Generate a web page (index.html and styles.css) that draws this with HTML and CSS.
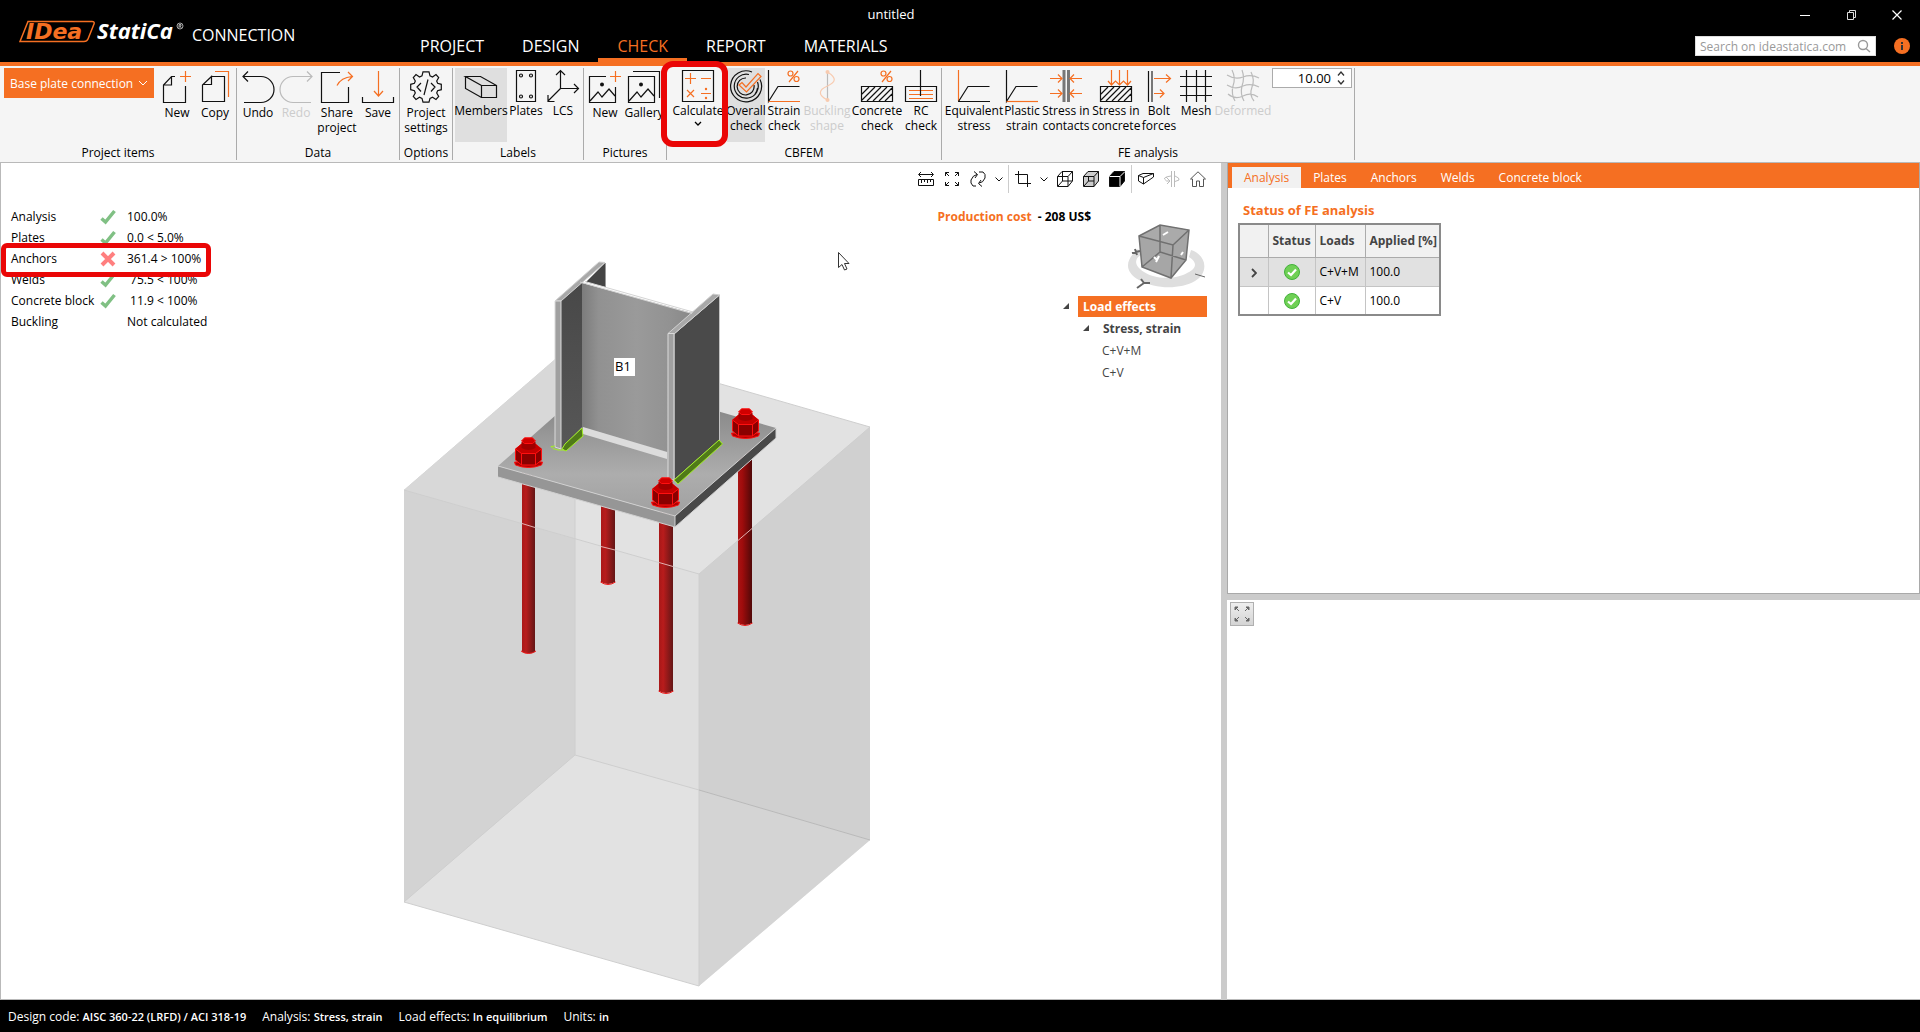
FILE: index.html
```html
<!DOCTYPE html>
<html lang="en">

<head>
  <meta charset="utf-8">
  <title>untitled</title>
  <meta name="viewport" content="width=device-width, initial-scale=1.0">
  <link rel="stylesheet" href="styles.css">
</head>

<body>
  <header class="topbar">
    <div class="brand">
      <svg class="logo" width="170" height="30" viewBox="0 0 170 30" role="img" aria-label="IDEA StatiCa">
        <path d="M2 22.500 L10 2.500 H74 Q77 2.500 76 5 L70 20 Q69 22.500 66 22.500 Z" fill="#000" stroke="#f56f22" stroke-width="1.500"/>
        <text class="logo-idea" x="8" y="20">IDea</text>
        <text class="logo-statica" x="79" y="20">StatiCa</text>
        <circle cx="162" cy="7" r="3" fill="none" stroke="#ccc" stroke-width="0.800"/>
        <path d="M161 9 V5.500 H163 V7 H161 M162 7 L163.300 9" fill="none" stroke="#ccc" stroke-width="0.800"/>
      </svg>
      <span class="product">CONNECTION</span>
    </div>
    <nav class="menu">
      <a href="#">PROJECT</a>
      <a href="#">DESIGN</a>
      <a href="#" class="active">CHECK</a>
      <a href="#">REPORT</a>
      <a href="#">MATERIALS</a>
    </nav>
    <div class="doc-title">untitled</div>
    <div class="top-right">
      <div class="window-buttons">
        <button aria-label="Minimize"><svg width="10" height="10"><path d="M0 5.500 H10" stroke="#fff"/></svg></button>
        <button aria-label="Restore"><svg width="10" height="10" fill="none" stroke="#ddd"><path d="M1.500 2.500 H7.500 V9.500 H1.500 Z M3.500 2.500 V0.500 H9.500 V7.500 H7.500"/></svg></button>
        <button aria-label="Close"><svg width="10" height="10"><path d="M0.500 0.500 L9.500 9.500 M9.500 0.500 L0.500 9.500" stroke="#fff" stroke-width="1.200"/></svg></button>
      </div>
      <div class="search-row">
        <div class="search">
          <input type="text" placeholder="Search on ideastatica.com" aria-label="Search on ideastatica.com">
          <svg width="14" height="14" fill="none" stroke="#999" stroke-width="1.400"><circle cx="6" cy="6" r="4.500"/><path d="M9 9.500 L13 13"/></svg>
        </div>
        <button class="info" aria-label="Info">
          <svg width="16" height="16"><circle cx="8" cy="8" r="8" fill="#f56f22"/><path d="M7 4 H9 V6 H7 Z M7 7 H9 V12 H7 Z" fill="#333"/></svg>
        </button>
      </div>
    </div>
  </header>

  <div class="ribbon">
    <section class="group low">
      <div class="tools">
        <div class="combo">
          <select aria-label="Project item">
            <option>Base plate connection</option>
          </select>
          <svg width="10" height="6"><path d="M1 1 L5 5 L9 1" fill="none" stroke="#fff"/></svg>
        </div>
        <button class="tool w38">
          <svg class="icon" viewBox="3 0 32 32"><path d="M17 5.500 H13.500 L5.500 14 V31.500 H27.500 V15 M5.500 14 H13.500 V5.500"/><path class="o" d="M27.500 0 V11 M22 5.500 H33"/></svg>
          <span>New</span>
        </button>
        <button class="tool w38">
          <svg class="icon" viewBox="0 0 32 32"><path d="M12.500 5.500 H25.500 V30.500 H3.500 V14 L12.500 5.500 V13.500 H3.500"/><path class="o" d="M16 0.500 H29.500 V26"/></svg>
          <span>Copy</span>
        </button>
      </div>
      <h2>Project items</h2>
    </section>

    <section class="group low">
      <div class="tools">
        <button class="tool w38">
          <svg class="icon" viewBox="0 0 32 32"><path d="M6 0.500 L1 5.500 L6 10.500 M1 5.500 H19 A13 13 0 0 1 19 31.500 H2"/></svg>
          <span>Undo</span>
        </button>
        <button class="tool w38" disabled>
          <svg class="icon" viewBox="0 0 32 32"><path d="M27 0.500 L32 5.500 L27 10.500 M32 5.500 H13 A13 13 0 0 0 13 31.500 H31"/></svg>
          <span>Redo</span>
        </button>
        <button class="tool w44">
          <svg class="icon" viewBox="0 0 32 32"><path d="M19 1.500 H0.500 V31.500 H27.500 V16"/><path class="o" d="M16 14.500 Q20 6.500 31 5.500 M27 1 L31.500 5.500 L27 10"/></svg>
          <span>Share<br>project</span>
        </button>
        <button class="tool w38">
          <svg class="icon" viewBox="0 0 32 32"><path d="M0.500 26 V31.500 H31.500 V26"/><path class="o" d="M16.500 0 V24 M12 20 L16.500 25 L21 20"/></svg>
          <span>Save</span>
        </button>
      </div>
      <h2>Data</h2>
    </section>

    <section class="group low">
      <div class="tools">
        <button class="tool w48">
          <svg class="icon" viewBox="0 0 32 32"><path d="M13 0.800 H19 L20 4.800 L22.500 6 L26 3.600 L28.700 6.500 L26.700 10 L27.600 12.300 L31.300 13.300 V18.700 L27.600 19.700 L26.700 22 L28.700 25.500 L26 28.400 L22.500 26.200 L20 27.400 L19 31.200 H13 L12 27.400 L9.500 26.200 L6 28.400 L3.300 25.500 L5.300 22 L4.400 19.700 L0.700 18.700 V13.300 L4.400 12.300 L5.300 10 L3.300 6.500 L6 3.600 L9.500 6 L12 4.800 Z M11 12 L7 16 L11 20.500 M21 12 L25 16 L21 20.500 M18 8.500 L14 24"/></svg>
          <span>Project<br>settings</span>
        </button>
      </div>
      <h2>Options</h2>
    </section>

    <section class="group">
      <div class="tools">
        <button class="tool w52 on">
          <svg class="icon" viewBox="0 0 32 32"><path d="M16.500 15.500 H31.500 V27.500 H16.500 Z M16.500 15.500 L0.500 6.500 H15.500 L31.500 15.500 M0.500 6.500 V18.500 L16.500 27.500"/></svg>
          <span>Members</span>
        </button>
        <button class="tool w38">
          <svg class="icon" viewBox="0 0 32 32"><path d="M6.500 0.500 H25.500 V31.500 H6.500 Z"/><circle cx="11" cy="5.500" r="1.500"/><circle cx="21" cy="5.500" r="1.500"/><circle cx="11" cy="26.500" r="1.500"/><circle cx="21" cy="26.500" r="1.500"/></svg>
          <span>Plates</span>
        </button>
        <button class="tool w36">
          <svg class="icon" viewBox="0 0 32 32"><path d="M13.500 19 V1 M9 5 L13.500 0.500 L18 5 M13.500 18.500 H31 M27 14 L31.500 18.500 L27 23 M13.500 18.500 L1 31 M1 25 V31.500 H7.500"/></svg>
          <span>LCS</span>
        </button>
      </div>
      <h2>Labels</h2>
    </section>

    <section class="group low">
      <div class="tools">
        <button class="tool w38">
          <svg class="icon" viewBox="0 0 32 32"><path d="M17 5.500 H0.500 V31.500 H26.500 V16 M1 30 L9 21 L13 26 L20 18 L26 25"/><circle class="dot" cx="13" cy="13.500" r="2"/><path class="o" d="M26.500 0 V11 M21 5.500 H32"/></svg>
          <span>New</span>
        </button>
        <button class="tool w40">
          <svg class="icon" viewBox="0 0 32 32"><path d="M0.500 5.500 H26.500 V31.500 H0.500 Z M1 30 L9 21 L13 26 L20 18 L26 25 M5 0.500 H31.500 V27"/><circle class="dot" cx="13" cy="13.500" r="2"/></svg>
          <span>Gallery</span>
        </button>
      </div>
      <h2>Pictures</h2>
    </section>

    <section class="group">
      <div class="tools">
        <button class="tool w58 marked">
          <svg class="icon" viewBox="0 0 32 32"><path d="M0.500 0.500 H31.500 V31.500 H0.500 Z"/><path class="o" d="M3 8.500 H14 M8.500 3 V14 M19 8.500 H29 M5 20 L12 27 M12 20 L5 27 M19 23.500 H29"/><circle class="od" cx="24" cy="19" r="1.200"/><circle class="od" cx="24" cy="28" r="1.200"/></svg>
          <span>Calculate</span>
          <svg class="more" width="8" height="5"><path d="M1 1 L4 4 L7 1" fill="none" stroke="#000" stroke-width="1.300"/></svg>
        </button>
        <button class="tool w38 on">
          <svg class="icon" viewBox="0 0 32 32"><path d="M22 2 A15.500 15.500 0 1 0 30 9.500 M19 4.500 A12 12 0 1 0 27.500 12 M27.500 18 A12 12 0 0 1 25 24 M16 8 A8.500 8.500 0 1 0 24 15"/><path class="o" d="M9 15 L12 12.500 L16 17 L28 3.500 L31 6.500 L16.500 22 Z"/></svg>
          <span>Overall<br>check</span>
        </button>
        <button class="tool w38">
          <svg class="icon" viewBox="0 0 32 32"><path d="M0.500 0 V31.500 L10 16.500 H31.500"/><path class="o" d="M0.500 31.500 H32 M30 1 L21 12"/><circle class="o" cx="22.500" cy="3.500" r="2.500"/><circle class="o" cx="28.500" cy="9" r="2.500"/></svg>
          <span>Strain<br>check</span>
        </button>
        <button class="tool w48" disabled>
          <svg class="icon" viewBox="0 0 32 32"><path d="M16.500 2 V30"/><path class="faded" d="M16.500 2 C26 8 25 12 16.500 16 C7 20 7 25 16.500 30"/><circle class="faded-dot" cx="16.500" cy="2" r="2"/><circle class="faded-dot" cx="16.500" cy="30" r="2"/></svg>
          <span>Buckling<br>shape</span>
        </button>
        <button class="tool w52">
          <svg class="icon" viewBox="0 0 32 32"><path d="M0.500 16.500 H31.500 V31.500 H0.500 Z M1 24 L8 17 M1 30 L14 17 M6 31 L20 17 M12 31 L26 17 M18 31 L31 18 M24 31 L31 24"/><path class="o" d="M30 1 L21 12"/><circle class="o" cx="22.500" cy="3.500" r="2.500"/><circle class="o" cx="28.500" cy="9" r="2.500"/></svg>
          <span>Concrete<br>check</span>
        </button>
        <button class="tool w36">
          <svg class="icon" viewBox="0 0 32 32"><path d="M0.500 16.500 H31.500 V31.500 H0.500 Z"/><path class="o" d="M4 20.500 H28 M4 24.500 H28 M4 28.500 H28"/><path d="M15.500 0 V26"/></svg>
          <span>RC<br>check</span>
        </button>
      </div>
      <h2>CBFEM</h2>
    </section>

    <section class="group">
      <div class="tools">
        <button class="tool w60">
          <svg class="icon" viewBox="0 0 32 32"><path class="o" d="M0.500 0 V31"/><path d="M0.500 31.500 L10 16.500 H31.500 M0 31.500 H32"/></svg>
          <span>Equivalent<br>stress</span>
        </button>
        <button class="tool w36">
          <svg class="icon" viewBox="0 0 32 32"><path d="M0.500 0 V31.500 L10 16.500 H31.500"/><path class="o" d="M0.500 31.500 H32"/></svg>
          <span>Plastic<br>strain</span>
        </button>
        <button class="tool w52">
          <svg class="icon" viewBox="0 0 32 32"><path class="bars" d="M14 0 V32 M18.500 0 V32"/><path class="o" d="M0 8.500 H12 M8 4.500 L12 8.500 L8 12.500 M0 23.500 H12 M8 19.500 L12 23.500 L8 27.500 M32 8.500 H20 M24 4.500 L20 8.500 L24 12.500 M32 23.500 H20 M24 19.500 L20 23.500 L24 27.500"/></svg>
          <span>Stress in<br>contacts</span>
        </button>
        <button class="tool w48">
          <svg class="icon" viewBox="0 0 32 32"><path d="M0.500 16.500 H31.500 V31.500 H0.500 Z M1 24 L8 17 M1 30 L14 17 M6 31 L20 17 M12 31 L26 17 M18 31 L31 18 M24 31 L31 24"/><path class="o" d="M11.500 0 V15 M8 11 L11.500 15 L15.500 11 L19.500 15 L23.500 11 L27.500 15 L31 11 M19.500 0 V15 M27.500 0 V15"/></svg>
          <span>Stress in<br>concrete</span>
        </button>
        <button class="tool w38">
          <svg class="icon" viewBox="0 0 32 32"><path d="M5.500 1 V32"/><path class="bar" d="M9 1 V32"/><path class="o" d="M11 8.500 H27 M23 4.500 L27.500 8.500 L23 12.500 M11 23.500 H20 M17 19.500 L21 23.500 L17 27.500"/></svg>
          <span>Bolt<br>forces</span>
        </button>
        <button class="tool w36">
          <svg class="icon" viewBox="0 0 32 32"><path d="M6.500 0 V32 M16.500 0 V32 M25.500 0 V32 M0 6.500 H32 M0 16.500 H32 M0 25.500 H32"/></svg>
          <span>Mesh</span>
        </button>
        <button class="tool w58" disabled>
          <svg class="icon" viewBox="0 0 32 32"><path d="M5 0 Q9 8 6 16 Q4 24 8 31 M15 0 Q18 8 15 16 Q13 24 17 31 M24 2 Q28 10 25 17 Q22 25 27 31 M0 5 Q8 10 16 7 Q24 4 32 8 M0 15 Q8 20 16 16 Q24 13 32 17 M1 24 Q8 30 16 26 Q24 22 31 27"/></svg>
          <span>Deformed</span>
        </button>
        <div class="spinner">
          <input type="text" value="10.00" aria-label="Deformation scale">
          <div class="arrows">
            <button aria-label="Increase"><svg width="8" height="5"><path d="M1 4.500 L4 1 L7 4.500" fill="none" stroke="#333" stroke-width="1.300"/></svg></button>
            <button aria-label="Decrease"><svg width="8" height="5"><path d="M1 0.500 L4 4 L7 0.500" fill="none" stroke="#333" stroke-width="1.300"/></svg></button>
          </div>
        </div>
      </div>
      <h2>FE analysis</h2>
    </section>
  </div>

  <main class="workspace">
    <div class="viewport">
      <svg class="scene" viewBox="1 163 1220 836">
        <defs>
          <linearGradient id="rod" x1="0" x2="1"><stop offset="0" stop-color="#a81818"/><stop offset="0.300" stop-color="#b81c1c"/><stop offset="1" stop-color="#641616"/></linearGradient>
          <linearGradient id="rodDark" x1="0" x2="1"><stop offset="0" stop-color="#a81414"/><stop offset="0.300" stop-color="#a00c0c"/><stop offset="1" stop-color="#500808"/></linearGradient>
          <linearGradient id="web" x1="0" x2="1"><stop offset="0" stop-color="#7c7c7c"/><stop offset="0.150" stop-color="#919191"/><stop offset="0.500" stop-color="#9a9a9a"/><stop offset="0.800" stop-color="#929292"/><stop offset="1" stop-color="#888"/></linearGradient>
          <linearGradient id="flange" x1="0" x2="0" y1="0" y2="1"><stop offset="0" stop-color="#484848"/><stop offset="1" stop-color="#575757"/></linearGradient>
          <linearGradient id="plate" x1="0" x2="0" y1="0" y2="1"><stop offset="0" stop-color="#777"/><stop offset="0.450" stop-color="#9a9a9a"/><stop offset="0.700" stop-color="#adadad"/><stop offset="1" stop-color="#a0a0a0"/></linearGradient>
          <g id="bolt" stroke="#ff1010" stroke-width="1">
            <path d="M0 25 L1 28 Q14 33 27 28 L28 25 Z" fill="#b00000"/>
            <path d="M1 12 L7 7 H21 L27 12 V23 L21 28 H7 L1 23 Z" fill="#8a0000"/>
            <path d="M1 12 L7 7 H21 L27 12 L21 17 H7 Z" fill="#c40000" stroke="none"/>
            <path d="M1 12 L7 16.500 H21 L27 12 M7 16.500 V28 M21 16.500 V28" fill="none"/>
            <path d="M7 5 V11 Q14 15 21 11 V5 Z" fill="#a00000" stroke="none"/>
            <path d="M7 4 L10 0.800 H18 L21 4 L18 6.500 H10 Z" fill="#d00000"/>
          </g>
        </defs>

        <!-- concrete block -->
        <path d="M404 490 L575 342 L870 427 V840 L699 986 L404 902 Z" fill="#e2e2e2"/>
        <path d="M404 490 L575 539 L699 574 V790 L575 755 L404 902 Z" fill="#dfdfdf"/>
        <path d="M404 490 L575 342 V755 L404 902 Z" fill="#d3d3d3"/>
        <path d="M404 490 L575 342 V539 Z" fill="#d8d8d8"/>
        <path d="M699 574 L870 427 V840 L699 790 Z" fill="#d0d0d0"/>
        <path d="M699 790 L870 840 L699 986 Z" fill="#d4d4d4"/>
        <path d="M575 342 L870 427 M575 342 V755 L699 790 M404 902 L699 986 M404 902 L575 755 M699 574 V986 M404 490 L699 574 L870 427" fill="none" stroke="#cecece"/>
        <path d="M699 790 L870 840" fill="none" stroke="#b9b9b9"/>

        <!-- anchors -->
        <path d="M601 500 H615 V582 Q608 586 601 582 Z" fill="url(#rod)"/>
        <path d="M522 450 H535 V652 Q528 655 522 652 Z" fill="url(#rod)"/>
        <path d="M659 500 H673 V691 Q666 695 659 691 Z" fill="url(#rod)"/>
        <path d="M738 440 H752 V623 Q745 627 738 623 Z" fill="url(#rodDark)"/>
        <path d="M600.500 582 Q608 587 615.500 582 M521 651 Q528.500 656 536 651 M658.500 691 Q666 696 673.500 691 M737.500 623 Q745 628 752.500 623" fill="none" stroke="#f01818"/>
        <path d="M522 523.500 L535 527.500 M601 546.500 L615 550 M659 562.500 L673 566.500 M738 540.500 L752 528.500" stroke="#e0b0b0"/>

        <!-- base plate -->
        <path d="M498 466 L599 377 L776 428 L675 516 Z" fill="url(#plate)"/>
        <path d="M498 466 L675 516 V527 L498 477 Z" fill="#969696"/>
        <path d="M675 516 L776 428 V438 L675 527 Z" fill="#494949"/>
        <path d="M498 466 L675 516 L776 428 M675 516 V527 M776 428 V438 L675 527 L498 477" fill="none" stroke="#d0d0d0"/>

        <!-- column -->
        <path d="M586 282 L605 263 V287 Z" fill="#444"/>
        <path d="M561 301 L582 282 V427 L561 449 Z" fill="url(#flange)"/>
        <path d="M582 283 L692 313 L668 334 V452 L582 427 Z" fill="url(#web)"/>
        <path d="M583 427 L667 452 V459 L583 434 Z" fill="#dcdcdc"/>
        <path d="M555 301 L599 262 L605 262.500 L561 301 Z" fill="#a8a8a8" stroke="#cfcfcf"/>
        <path d="M555 301 H561 V449 L555 447 Z" fill="#a0a0a0" stroke="#dadada"/>
        <path d="M674 334 L719.500 295 V440 L674 480 Z" fill="#4a4a4a" stroke="#c4c4c4"/>
        <path d="M668 333.500 L713 294 L719.500 295 L674 334 Z" fill="#a8a8a8" stroke="#cfcfcf"/>
        <path d="M668 333.500 H674 V480 H668 Z" fill="#a0a0a0" stroke="#dadada"/>
        <path d="M580 282 L692 313.500 M585 281.500 L693 312" fill="none" stroke="#d4d4d4"/>
        <path d="M605.500 263 V287" stroke="#999"/>

        <!-- welds -->
        <path d="M582 428 L583 436 L566 451 L562 449 L565 444 Z" fill="#507a18" stroke="#a4f028"/>
        <path d="M555 446 L551 446.500 L553 448.500 L558 450 H564" fill="none" stroke="#a4f028"/>
        <path d="M719 440 L722.500 444 L678 484 L674 480 Z" fill="#507a18" stroke="#a4f028"/>

        <use href="#bolt" x="514.500" y="437"/>
        <use href="#bolt" x="651.500" y="477"/>
        <use href="#bolt" x="731.500" y="408"/>

        <path d="M614 358 H635 V376 H614 Z" fill="#fff"/>
        <text class="member-name" x="615" y="371">B1</text>

        <path d="M838.500 252.500 V267.500 L842 264.500 L844.500 270 L847 269 L844.500 263.500 H849 Z" fill="#fff" stroke="#333"/>
      </svg>

      <ul class="summary">
        <li><span>Analysis</span><svg class="mark" viewBox="0 0 16 16"><path d="M1.500 9.500 L5.500 13 L14.500 2" fill="none" stroke="#80c084" stroke-width="3.500"/></svg><span>100.0%</span></li>
        <li><span>Plates</span><svg class="mark" viewBox="0 0 16 16"><path d="M1.500 9.500 L5.500 13 L14.500 2" fill="none" stroke="#80c084" stroke-width="3.500"/></svg><span>0.0 &lt; 5.0%</span></li>
        <li class="failed"><span>Anchors</span><svg class="mark" viewBox="0 0 16 16"><path d="M2 2 L14 14 M14 2 L2 14" fill="none" stroke="#ff7f7f" stroke-width="4"/></svg><span>361.4 &gt; 100%</span></li>
        <li><span>Welds</span><svg class="mark" viewBox="0 0 16 16"><path d="M1.500 9.500 L5.500 13 L14.500 2" fill="none" stroke="#80c084" stroke-width="3.500"/></svg><span>&nbsp;75.5 &lt; 100%</span></li>
        <li><span>Concrete block</span><svg class="mark" viewBox="0 0 16 16"><path d="M1.500 9.500 L5.500 13 L14.500 2" fill="none" stroke="#80c084" stroke-width="3.500"/></svg><span>&nbsp;11.9 &lt; 100%</span></li>
        <li><span>Buckling</span><i></i><span>Not calculated</span></li>
      </ul>

      <div class="view-panel">
        <div class="view-tools">
          <button aria-label="Measure"><svg width="16" height="16"><path d="M0.500 8.500 H15.500 V14.500 H0.500 Z M3.500 9 V12 M6.500 9 V11 M9.500 9 V12 M12.500 9 V11 M1 3.500 H15 M3 1 L0.500 3.500 L3 6 M13 1 L15.500 3.500 L13 6"/></svg></button>
          <button aria-label="Zoom all"><svg width="16" height="16"><path d="M1.500 5 V1.500 H5 M1.500 1.500 L5 5 M11 1.500 H14.500 V5 M14.500 1.500 L11 5 M1.500 11 V14.500 H5 M1.500 14.500 L5 11 M14.500 11 V14.500 H11 M14.500 14.500 L11 11"/></svg></button>
          <button aria-label="Rotate"><svg width="16" height="16"><path d="M6 15 H3 Q0 12 1 9 Q3 4 7 3.500 M4 0.500 L7.500 3.500 L5 7 M9 1 H13 Q16 3 15 7 Q13 12 9 12 M11 9 L8.500 12.500 L12 15.500"/></svg></button>
          <button class="chevron" aria-label="More rotations"><svg width="8" height="5"><path d="M0.500 0.500 L4 4 L7.500 0.500"/></svg></button>
          <i class="sep"></i>
          <button aria-label="Clip"><svg width="16" height="16"><path d="M0 3.500 H12.500 V16 M3.500 0 V12.500 H16"/></svg></button>
          <button class="chevron" aria-label="More clipping"><svg width="8" height="5"><path d="M0.500 0.500 L4 4 L7.500 0.500"/></svg></button>
          <button aria-label="Wireframe"><svg width="16" height="16"><path d="M0.500 5.500 L5 0.500 H15.500 V10 L11 15.500 H0.500 Z M0.500 5.500 H11 V15.500 M11 5.500 L15.500 0.500 M5.500 1 V10 H15 M5.500 10 L1 15"/></svg></button>
          <button aria-label="Transparent"><svg width="16" height="16"><path fill="#ccc" d="M0.500 5.500 L5 0.500 H15.500 V10 L11 15.500 H0.500 Z"/><path d="M0.500 5.500 H11 V15.500 M11 5.500 L15.500 0.500 M5.500 6 V10 H11 M5.500 10 L1 15"/></svg></button>
          <button aria-label="Solid"><svg width="16" height="16"><path fill="#000" d="M0.500 5.500 L5 0.500 H15.500 V10 L11 15.500 H0.500 Z"/><path stroke="#fff" d="M0.500 5.500 H11 V15.500 M11 5.500 L15.500 1"/></svg></button>
          <i class="sep"></i>
          <button aria-label="Members"><svg width="16" height="16"><path d="M0.500 4.500 L5 2.500 H15.500 V6 L5.500 13 L0.500 10 Z M0.500 4.500 L5.500 6.500 V13 M5.500 6.500 L15.500 2.500"/></svg></button>
          <button class="off" aria-label="Cut"><svg width="16" height="16"><path d="M7.500 0 V16 M10.500 0 V16 M7 5 Q0 6 0.500 8 Q2 11 6 10 M11 5 Q16 7 15 9 L11 10.500 M2 6 L6 10 L3 13"/></svg></button>
          <button aria-label="Home"><svg width="16" height="16"><path stroke="#555" d="M0.500 8 L8 0.800 L15.500 8 H13.500 V15.500 H9.500 V10 H6.500 V15.500 H2.500 V8 Z"/></svg></button>
        </div>

        <p class="cost"><span>Production cost</span> - 208 US$</p>

        <svg class="nav-cube" width="80" height="66" viewBox="0 0 80 66">
          <path d="M11 25 C-1 35 -4 47 12 56 C30 66 54 65 68 57 C82 49 80 31 64 26 L62 33 C74 41 66 47 56 51 C42 56 26 54 17 48 C6 41 8 34 14 31 Z" fill="#dedede"/>
          <path d="M12 12 L33 1 L62 6 L59 36 L44 54 L15 43 Z" fill="#9c9c9c" opacity="0.900"/>
          <path d="M12 12 L33 1 L62 6 L46 21 Z" fill="#aaa"/>
          <path d="M12 12 L33 1 L62 6 L59 36 L44 54 L15 43 Z M12 12 L46 21 L62 6 M46 21 L44 54 M33 1 V28 L59 36 M33 28 L15 43" fill="none" stroke="#707070" stroke-width="1.500"/>
          <path d="M36 11 L41 8 M27 33 L30 36 L32 32 M29 38 L30 36 M54 31 L56 28" stroke="#fff" stroke-width="2" fill="none"/>
          <path d="M5 29 L13 27 M8 25 L10 31 M14 55 L17 59 L23 59 M17 59 L10 64" stroke="#666" stroke-width="2" fill="none"/>
          <path d="M68 50 L78 53" stroke="#666"/>
        </svg>

        <ul class="tree">
          <li class="root"><svg width="6" height="6"><path d="M6 0 V6 H0 Z" fill="#444"/></svg><a href="#">Load effects</a></li>
          <li class="branch"><svg width="6" height="6"><path d="M6 0 V6 H0 Z" fill="#444"/></svg><a href="#">Stress, strain</a></li>
          <li class="leaf"><a href="#">C+V+M</a></li>
          <li class="leaf"><a href="#">C+V</a></li>
        </ul>
      </div>
    </div>

    <aside class="side">
      <section class="results">
        <nav class="tabs">
          <a href="#" class="active">Analysis</a>
          <a href="#">Plates</a>
          <a href="#">Anchors</a>
          <a href="#">Welds</a>
          <a href="#">Concrete block</a>
        </nav>
        <h3>Status of FE analysis</h3>
        <table>
          <thead>
            <tr><th class="c-mark"></th><th class="c-status">Status</th><th class="c-loads">Loads</th><th class="c-applied">Applied [%]</th></tr>
          </thead>
          <tbody>
            <tr class="selected">
              <td class="center"><svg width="6" height="10"><path d="M1 1 L5 5 L1 9" fill="none" stroke="#444" stroke-width="1.800"/></svg></td>
              <td class="center"><svg width="16" height="16"><circle cx="8" cy="8" r="7.500" fill="#6fd055" stroke="#42b13a"/><path d="M4 8.500 L7 11 L12 5.500" fill="none" stroke="#fff" stroke-width="2.200"/></svg></td>
              <td>C+V+M</td>
              <td>100.0</td>
            </tr>
            <tr>
              <td></td>
              <td class="center"><svg width="16" height="16"><circle cx="8" cy="8" r="7.500" fill="#6fd055" stroke="#42b13a"/><path d="M4 8.500 L7 11 L12 5.500" fill="none" stroke="#fff" stroke-width="2.200"/></svg></td>
              <td>C+V</td>
              <td>100.0</td>
            </tr>
          </tbody>
        </table>
      </section>
      <section class="detail">
        <button class="fit" aria-label="Zoom all">
          <svg width="16" height="16" fill="#666" stroke="#666"><path d="M1 1 H4 L1 4 Z M2 2 L5 5 M15 1 V4 L12 1 Z M14 2 L11 5 M1 15 V12 L4 15 Z M2 14 L5 11 M15 15 H12 L15 12 Z M14 14 L11 11"/></svg>
        </button>
      </section>
    </aside>
  </main>

  <footer class="statusbar">
    <span>Design code: <b>AISC 360-22 (LRFD) / ACI 318-19</b></span>
    <span>Analysis: <b>Stress, strain</b></span>
    <span>Load effects: <b>In equilibrium</b></span>
    <span>Units: <b>in</b></span>
  </footer>
</body>

</html>
```
FILE: styles.css
```css
* {
  margin: 0;
  padding: 0;
  box-sizing: border-box;
}

body {
  display: flex;
  flex-direction: column;
  height: 100vh;
  overflow: hidden;
  background: #fff;
  color: #000;
  font-family: 'Segoe UI', 'Open Sans', 'Noto Sans', sans-serif;
  font-size: 12px;
  line-height: 15px;
}

button,
input,
select {
  border: none;
  background: none;
  color: inherit;
  font: inherit;
}

a {
  color: inherit;
  text-decoration: none;
}

ul {
  list-style: none;
}

/* top bar */
.topbar {
  position: relative;
  display: flex;
  flex: none;
  height: 66px;
  background: #000;
  border-bottom: 4px solid #f56f22;
  color: #fff;
}

.brand {
  display: flex;
  align-items: flex-start;
  gap: 4px;
  width: 401px;
  padding: 19px 0 0 18px;
}

.logo {
  flex: none;
  overflow: visible;
}

.logo-idea {
  fill: #f56f22;
  font: italic 700 22px 'DejaVu Sans', sans-serif;
}

.logo-statica {
  fill: #fff;
  font: italic 700 22px 'Open Sans', sans-serif;
}

.product {
  font-size: 16px;
  line-height: 32px;
}

.menu {
  display: flex;
  align-items: flex-end;
}

.menu a {
  height: 24px;
  padding: 0 19px;
  border-bottom: 4px solid transparent;
  font-size: 16px;
  line-height: 16px;
}

.menu a.active {
  border-color: #f56f22;
  color: #f56f22;
}

.doc-title {
  position: absolute;
  top: 6px;
  left: 0;
  right: 138px;
  font-size: 13px;
  line-height: 16px;
  text-align: center;
  pointer-events: none;
}

.top-right {
  display: flex;
  flex-direction: column;
  align-items: flex-end;
  gap: 6px;
  margin-left: auto;
}

.window-buttons {
  display: flex;
}

.window-buttons button {
  width: 46px;
  height: 30px;
}

.search-row {
  display: flex;
  align-items: center;
  gap: 18px;
  padding-right: 10px;
}

.search {
  display: flex;
  align-items: center;
  width: 181px;
  height: 20px;
  padding: 0 4px;
  background: #fff;
  border: 1px solid #ddd;
}

.search input {
  flex: 1;
  min-width: 0;
}

.search input::placeholder {
  color: #999;
}

.info {
  height: 16px;
}

/* ribbon */
.ribbon {
  display: flex;
  flex: none;
  height: 97px;
  padding-top: 2px;
  background: #f5f5f5;
  border-bottom: 1px solid #b9b9b9;
}

.group {
  height: 92px;
  padding: 0 2px;
  border-right: 1px solid #ababab;
}

.group h2 {
  font-size: 12px;
  font-weight: 400;
  line-height: 22px;
  text-align: center;
}

.tools {
  display: flex;
  height: 74px;
}

.tool {
  display: flex;
  flex: none;
  flex-direction: column;
  align-items: center;
  gap: 1px;
  padding-top: 2px;
  line-height: 15px;
  white-space: nowrap;
}

.low .tool {
  gap: 2px;
  padding-top: 3px;
}

.tool.on {
  background: #dfdfdf;
}

.tool:disabled {
  color: #ccc;
}

.tool .more {
  margin-top: 2px;
}

.w36 { width: 36px; }
.w38 { width: 38px; }
.w40 { width: 40px; }
.w44 { width: 44px; }
.w48 { width: 48px; }
.w52 { width: 52px; }
.w58 { width: 58px; }
.w60 { width: 60px; }

.icon {
  flex: none;
  width: 32px;
  height: 32px;
  overflow: visible;
  fill: none;
  stroke: #111;
  stroke-width: 1.2;
}

.tool:disabled .icon {
  stroke: #bbb;
}

.icon .o {
  stroke: #f56f22;
}

.icon .od {
  fill: #f56f22;
  stroke: none;
}

.icon .dot {
  fill: #111;
  stroke: none;
}

.icon .bar,
.icon .bars {
  stroke: #777;
  stroke-width: 2;
}

.icon .bars {
  stroke-width: 3;
}

.icon .faded {
  stroke: #f8cbb0;
}

.icon .faded-dot {
  fill: #f8cbb0;
  stroke: none;
}

.marked {
  position: relative;
}

.marked::after {
  content: "";
  position: absolute;
  z-index: 2;
  inset: -7px -1px -5px -8px;
  border: 6px solid #ea0606;
  border-radius: 12px;
}

.combo {
  position: relative;
  width: 150px;
  height: 30px;
  margin: 0 4px 0 2px;
  background: #f56f22;
  color: #fff;
}

.combo select {
  width: 100%;
  height: 100%;
  padding-left: 6px;
  appearance: none;
}

.combo svg {
  position: absolute;
  top: 12px;
  right: 6px;
  pointer-events: none;
}

.spinner {
  display: flex;
  width: 80px;
  height: 20px;
  background: #fff;
  border: 1px solid #ababab;
}

.spinner input {
  flex: 1;
  min-width: 0;
  font-size: 13px;
  text-align: right;
}

.arrows {
  display: flex;
  flex-direction: column;
  justify-content: center;
  gap: 4px;
  width: 20px;
}

.arrows button {
  display: flex;
  justify-content: center;
}

/* workspace */
.workspace {
  display: grid;
  flex: 1;
  grid-template-columns: minmax(0, 1fr) 693px;
  gap: 6px;
  min-height: 0;
  background: #cbcbcb;
}

.viewport {
  position: relative;
  background: #fff;
  border-left: 1px solid #b9b9b9;
  border-bottom: 1px solid #b9b9b9;
}

.scene {
  position: absolute;
  inset: 0;
  width: 100%;
  height: 100%;
}

.member-name {
  font: 13px 'Open Sans', sans-serif;
}

.summary {
  position: absolute;
  top: 43px;
  left: 10px;
}

.summary li {
  display: grid;
  grid-template-columns: 89px 27px 84px;
  align-items: center;
  height: 21px;
  white-space: nowrap;
}

.summary .failed {
  position: relative;
}

.summary .failed::after {
  content: "";
  position: absolute;
  inset: -5px 0 -8px -10px;
  border: 5px solid #ea0606;
  border-radius: 6px;
}

.mark {
  width: 16px;
  height: 16px;
}

.view-panel {
  position: absolute;
  top: 0;
  right: 10px;
  display: flex;
  flex-direction: column;
  align-items: flex-end;
}

.view-tools {
  display: flex;
  align-items: center;
  height: 32px;
}

.view-tools button {
  display: flex;
  justify-content: center;
  width: 26px;
}

.view-tools .chevron {
  width: 16px;
}

.view-tools svg {
  fill: none;
  stroke: #111;
}

.view-tools .off svg {
  stroke: #bbb;
}

.sep {
  width: 1px;
  height: 28px;
  margin: 0 1px;
  background: #ccc;
}

.cost {
  margin: 14px 120px 0 0;
  font-weight: 700;
}

.cost span {
  margin-right: 3px;
  color: #f56f22;
}

.nav-cube {
  margin-right: 4px;
}

.tree {
  width: 144px;
  margin: 5px 4px 0 0;
  color: #444;
}

.tree li {
  display: flex;
  align-items: center;
  height: 22px;
}

.tree .root,
.tree .branch {
  font-weight: 700;
}

.tree .root a {
  flex: 1;
  margin-left: 9px;
  padding-left: 5px;
  background: #f56f22;
  color: #fff;
  line-height: 21px;
}

.tree .branch {
  padding-left: 20px;
}

.tree .branch a {
  margin-left: 14px;
}

.tree .leaf {
  padding-left: 39px;
}

.side {
  display: grid;
  grid-template-rows: minmax(0, 14fr) minmax(0, 13fr);
  gap: 6px;
  min-height: 0;
}

.results {
  background: #fff;
  border: 1px solid #a9a9a9;
  border-top: none;
}

.tabs {
  display: flex;
  padding: 4px 0 0 4px;
  background: #f56f22;
  color: #fff;
}

.tabs a {
  padding: 0 12px;
  line-height: 21px;
}

.tabs a.active {
  background: #f1f1f1;
  color: #f56f22;
}

.results h3 {
  margin: 14px 0 4px 15px;
  color: #f56f22;
  font-size: 13px;
  line-height: 17px;
}

table {
  width: 203px;
  margin-left: 10px;
  border: 2px solid #8a8a8a;
  border-collapse: collapse;
  table-layout: fixed;
}

th,
td {
  height: 29px;
  padding-left: 4px;
  border: 1px solid #c4c4c4;
  text-align: left;
  white-space: nowrap;
}

th {
  height: 33px;
  background: #f1f1f1;
  border-color: #ababab;
  color: #444;
}

.c-mark { width: 29px; }
.c-status { width: 47px; }
.c-loads { width: 50px; }

.selected {
  background: #e1e1e1;
}

td.center {
  padding: 0;
  text-align: center;
}

td svg {
  vertical-align: middle;
}

.detail {
  padding: 2px 3px;
  background: #fff;
  border-bottom: 1px solid #b9b9b9;
}

.fit {
  display: flex;
  align-items: center;
  justify-content: center;
  width: 24px;
  height: 24px;
  background: linear-gradient(#eee, #d4d4d4);
  border: 1px solid #b0b0b0;
}

/* status bar */
.statusbar {
  display: flex;
  flex: none;
  align-items: center;
  gap: 16px;
  height: 32px;
  padding-left: 8px;
  background: #000;
  color: #fff;
}

.statusbar b {
  font-size: 11px;
  font-weight: 600;
}
```
